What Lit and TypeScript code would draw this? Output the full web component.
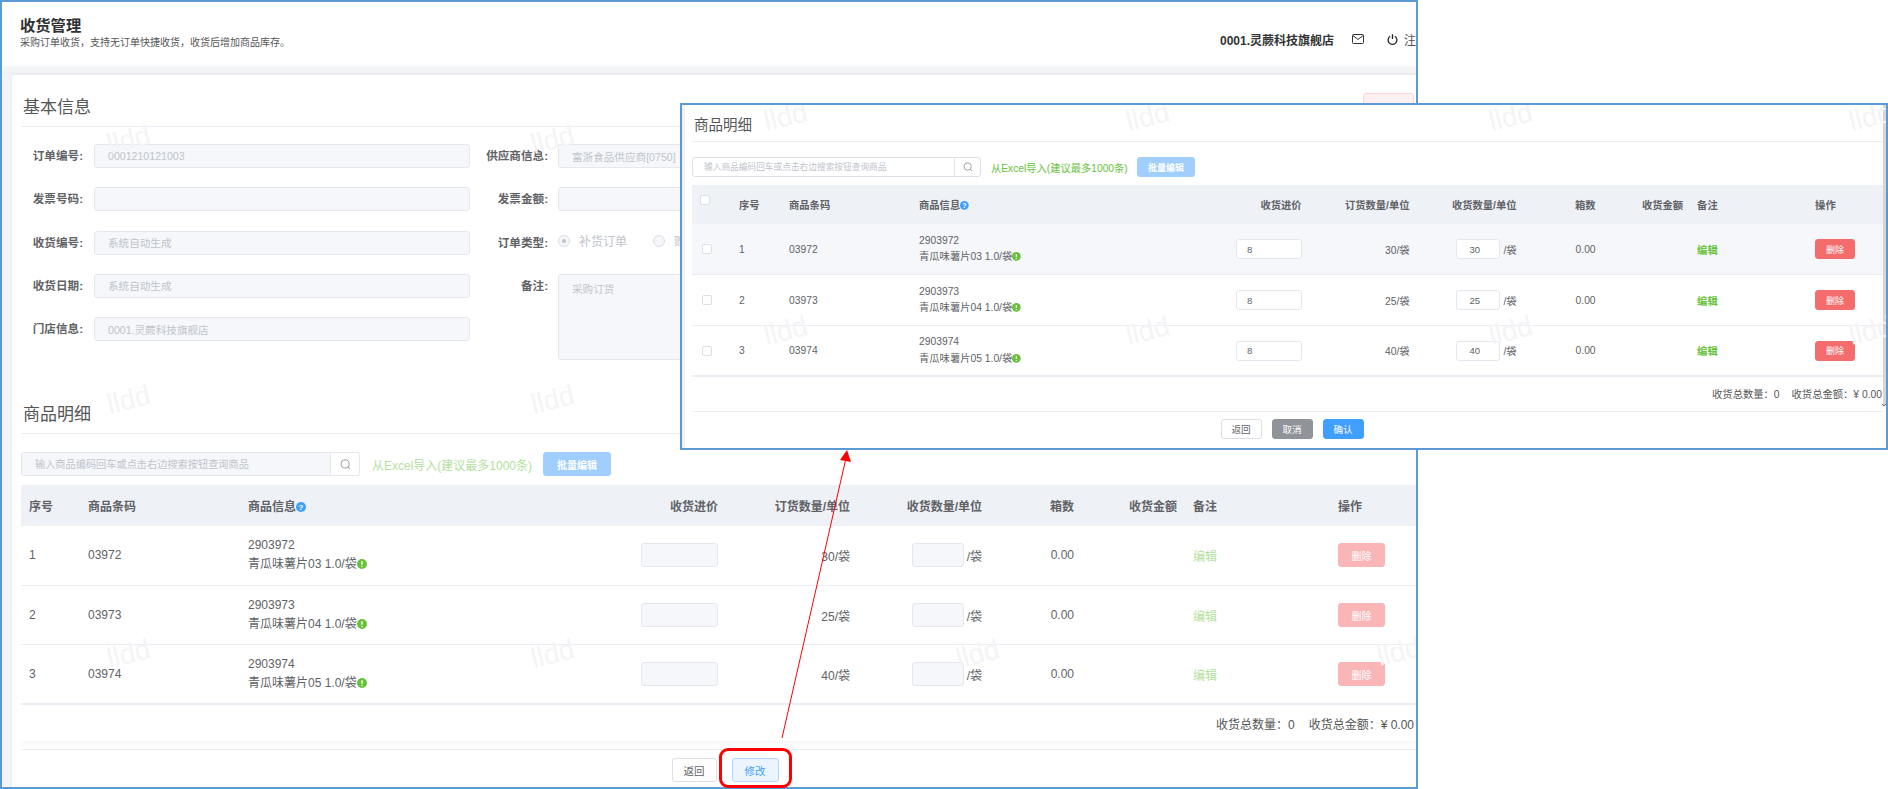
import { LitElement, html, css, svg } from "lit";
import { customElement } from "lit/decorators.js";

const ROWS = [
  { no: 1, bar: "03972", code: "2903972", name: "青瓜味薯片03 1.0/袋", order: 30 },
  { no: 2, bar: "03973", code: "2903973", name: "青瓜味薯片04 1.0/袋", order: 25 },
  { no: 3, bar: "03974", code: "2903974", name: "青瓜味薯片05 1.0/袋", order: 40 },
];

const helpIcon = svg`<svg class="tip" viewBox="0 0 10 10"><circle cx="5" cy="5" r="5" fill="#409eff"/><text x="5" y="8" text-anchor="middle" font-size="8" font-weight="700" fill="#fff" font-family="Liberation Sans, sans-serif">?</text></svg>`;
const bangIcon = svg`<svg class="tip" viewBox="0 0 10 10"><circle cx="5" cy="5" r="5" fill="#67c23a"/><path d="M5 2.2V5.8M5 7V8" stroke="#fff" stroke-width="1.4" fill="none"/></svg>`;
const searchIcon = svg`<svg class="search-ic" viewBox="0 0 12 12"><circle cx="5.6" cy="5.4" r="4.4" fill="none" stroke="#909399" stroke-width="1"/><path d="M8.8 8.6L10.8 10.8" stroke="#909399" stroke-width="1" fill="none"/></svg>`;

@customElement("app-root")
export class AppRoot extends LitElement {
  static styles = css`
    :host { display: block; position: relative; width: 1888px; height: 789px; overflow: hidden; background: #fff;
      font-family: "Liberation Sans", "Noto Sans CJK SC", sans-serif; color: #606266; font-size: 12px; }
    * { box-sizing: border-box; }
    .window { position: relative; width: 1418px; height: 789px; border: 2px solid #5b9bd5; overflow: hidden; display: flex; flex-direction: column; background: #fff; }
    .top { height: 64px; flex: none; display: flex; justify-content: space-between; padding: 14px 0 0 18px; background: #fff; }
    .top h1 { margin: 0; font-size: 15.3px; line-height: 20px; font-weight: 700; color: #303133; }
    .top p { margin: 0; font-size: 10px; line-height: 14px; color: #555; }
    .user { display: flex; align-items: center; height: 46px; margin-right: -12px; flex: none; color: #303133; }
    .user b { font-size: 12px; width: 114px; white-space: nowrap; color: #333; }
    .user svg { flex: none; }
    .mail { width: 12px; height: 10px; margin-left: 18px; }
    .power { width: 11px; height: 11px; margin-left: 23px; }
    .user span { margin-left: 6px; width: 24px; white-space: nowrap; color: #555; }
    .shell { flex: 1; min-height: 0; background: linear-gradient(#f6f7f8, #eef0f3 9px, #f2f4f7 9px); padding: 9px 0 0 10px; display: flex; }
    .card { flex: 1; min-width: 0; background: #fff; padding: 0 0 0 9px; box-shadow: 0 0 4px rgba(0,0,0,.05); position: relative; display: flex; flex-direction: column; }
    .print { position: absolute; right: 2px; top: 18px; width: 51px; height: 24px; background: #fef0f0; border: 1px solid #fbd5d5; border-radius: 3px; }
    .sec { height: 42px; flex: none; display: flex; align-items: center; padding-left: 2px; border-bottom: 1px solid #ebeef5; font-size: 17px; color: #555; }
    .sec.first { margin-top: 10px; }
    .sec.second { margin-top: 51px; }
    .form { margin-top: 17px; display: grid; grid-template-columns: 62px 387px 88px 376px; grid-template-rows: repeat(5, 24px); row-gap: 19.25px; flex: none; }
    .form label { font-weight: 700; font-size: 11.6px; text-align: right; line-height: 24px; white-space: nowrap; color: #606266; }
    .form label.c2 { grid-column: 3; padding-right: 10px; }
    .form .in1 { margin-left: 11px; width: 376px; }
    .form .c1 { grid-column: 1; }
    .fi { height: 24px; width: 376px; border: 1px solid #e4e7ed; border-radius: 3px; background: #f5f7fa; padding: 0 13px; color: #c0c4cc; font: inherit; font-size: 10.6px; outline: none; display: block; }
    .fi::placeholder { color: #c0c4cc; }
    .ta { height: 86px; width: 376px; resize: none; padding: 6px 13px; line-height: 14px; border: 1px solid #e4e7ed; border-radius: 3px; background: #f5f7fa; color: #c0c4cc; font: inherit; font-size: 10.6px; outline: none; display: block; grid-row: 4 / span 2; grid-column: 4; }
    .radios { grid-column: 4; display: flex; align-items: center; height: 20px; color: #c0c4cc; font-size: 12px; white-space: nowrap; }
    .radio { width: 12px; height: 12px; border: 1px solid #dcdfe6; background: #f5f7fa; border-radius: 50%; display: flex; align-items: center; justify-content: center; margin-right: 9px; flex: none; }
    .radio.on::after { content: ""; width: 4px; height: 4px; border-radius: 50%; background: #c0c4cc; }
    .radios span + .radio { margin-left: 26px; }

    .tools { display: flex; align-items: center; flex: none; margin-top: 18px; height: 24px; }
    .search { display: flex; width: 339px; height: 24px; border: 1px solid #e4e7ed; border-radius: 3px; overflow: hidden; flex: none; background: #fff; }
    .search input { flex: 1; min-width: 0; border: 0; background: #f5f7fa; padding: 0 13px; font: inherit; font-size: 10.2px; outline: none; }
    .search input::placeholder { color: #c0c4cc; }
    .search div { width: 29px; flex: none; display: flex; align-items: center; justify-content: center; border-left: 1px solid #e4e7ed; }
    .search-ic { width: 11px; height: 11px; }
    .excel { margin-left: 12px; color: #b3e19d; white-space: nowrap; font-size: 12px; width: 159px; }
    .batch { margin-left: 12px; width: 68px; height: 24px; background: #a0cfff; border: 1px solid #a0cfff; border-radius: 3px; color: #fff; font: inherit; font-size: 10px; font-weight: 700; padding: 0; }

    .tbl { margin-top: 9px; flex: none; }
    .row { display: grid; grid-template-columns: 59px 160px 360px 126px 132px 132px 92px 103px 145px 86px; height: 59.7px; align-items: center; border-bottom: 1px solid #ebeef5; }
    .row.head { height: 41px; background: #eef1f6; border-bottom: 0; font-weight: 700; }
    .row.last { border-bottom-width: 2px; }
    .l { padding-left: 8px; white-space: nowrap; }
    .r { padding-right: 8px; text-align: right; white-space: nowrap; }
    .info { line-height: 19px; }
    .tip { width: 10px; height: 10px; display: inline-block; vertical-align: -1px; }
    .cell-in { display: flex; justify-content: flex-end; align-items: center; padding-right: 8px; white-space: nowrap; }
    .num { height: 24px; width: 77px; border: 1px solid #e4e7ed; border-radius: 3px; background: #f5f7fa; font: inherit; padding: 0 11px; outline: none; color: #606266; }
    .num.qty { width: 52px; margin-right: 3px; }
    .edit { color: #b3e19d; }
    .del { width: 47px; height: 24px; background: #fab6b6; border: 1px solid #fab6b6; border-radius: 3px; color: #fff; font: inherit; font-size: 10px; padding: 0; display: block; }
    .total { height: 36px; flex: none; display: flex; justify-content: flex-end; align-items: center; padding-right: 2px; gap: 14px; white-space: nowrap; color: #555; font-size: 12px; }
    .foot { flex: 1; background: linear-gradient(#f9f9fa, #fff) top/100% 8px no-repeat; padding-top: 8px; }
    .foot-in { border-top: 1px solid #ebeef5; display: flex; justify-content: center; padding: 8px 0 0 13px; gap: 15px; }
    .btn { height: 24px; width: 45px; border: 1px solid #dcdfe6; border-radius: 3px; background: #fff; color: #606266; font: inherit; font-size: 10.5px; padding: 0; }
    .btn.edit-btn { width: 47px; background: #ecf5ff; border-color: #b3d8ff; color: #409eff; }

    .modal { position: absolute; left: 680px; top: 103px; width: 1208px; height: 347px; border: 2px solid #5b9bd5; background: #fff; overflow: hidden; display: flex; font-size: 10.3px; }
    .strip { width: 3px; background: #f0f2f5; flex: none; }
    .mbody { flex: none; width: 1191px; margin-left: 7px; display: flex; flex-direction: column; }
    .modal .sec { height: 37px; font-size: 14.5px; padding-top: 0; margin: 0; }
    .modal .tools { margin-top: 15px; height: 20px; }
    .modal .search { width: 289px; height: 20px; border-color: #dcdfe6; }
    .modal .search input { background: #fff; font-size: 8.7px; padding: 0 11px; }
    .modal .search div { width: 26px; }
    .modal .search-ic { width: 10px; height: 10px; }
    .modal .excel { margin-left: 10px; color: #67c23a; font-size: 10.25px; width: 136px; }
    .modal .batch { margin-left: 10px; width: 58px; height: 20px; font-size: 9px; }
    .modal .tbl { margin-top: 8px; }
    .modal .row { grid-template-columns: 39px 50px 130px 289px 109.6px 108px 107px 79px 87.5px 116px 76px; height: 51px; }
    .modal .row.head { height: 39px; }
    .modal .row.hl { background: #f5f7fa; }
    .modal .info { line-height: 16.5px; }
    .modal .tip { width: 8.7px; height: 8.7px; }
    .modal .num { height: 20px; width: 65.6px; background: #fff; padding: 0 10px; font-size: 9.6px; }
    .modal .num.qty { width: 44px; margin-right: 3px; padding: 0 12px; }
    .modal .edit { color: #67c23a; font-weight: 700; }
    .modal .note { padding-left: 6px; }
    .modal .del { width: 40px; height: 20px; background: #f56c6c; border-color: #f56c6c; font-size: 9px; }
    .check { width: 10px; height: 10px; border: 1px solid #dcdfe6; border-radius: 2px; background: #fff; display: block; margin-left: 10px; }
    .head .check { margin-left: 0; margin-top: -9px; }
    .modal .total { height: 34px; font-size: 10.3px; gap: 12px; padding: 0 1px 2px 0; }
    .modal .foot-in { flex: none; padding: 7px 0 0 9px; gap: 10px; }
    .modal .btn { width: 41px; height: 20px; font-size: 9.6px; }
    .btn.gray { background: #909399; border-color: #909399; color: #fff; }
    .btn.blue { background: #409eff; border-color: #409eff; color: #fff; }
    .scroll { position: absolute; right: 0; top: 0; width: 3px; height: 300px; background: #d4d6da; }
    .chev { position: absolute; right: 0; top: 298px; width: 4px; height: 4px; }

    .wm { position: absolute; font-size: 28px; color: #f4f4f6; transform: rotate(-14deg); line-height: 1; pointer-events: none; font-family: "Liberation Sans", sans-serif; }
    .redbox { position: absolute; left: 719px; top: 748px; width: 73px; height: 40px; border: 3px solid #f00; border-radius: 9px; }
    .arrow { position: absolute; left: 0; top: 0; width: 1888px; height: 789px; pointer-events: none; }
  `;

  private table(modal: boolean) {
    return html`<div class="tbl">
      <div class="row head">
        ${modal ? html`<div class="l"><i class="check"></i></div>` : ""}
        <div class="l">序号</div><div class="l">商品条码</div><div class="l">商品信息${helpIcon}</div>
        <div class="r">收货进价</div><div class="r">订货数量/单位</div><div class="r">收货数量/单位</div>
        <div class="r">箱数</div><div class="r">收货金额</div><div class="l note">备注</div><div class="l">操作</div>
      </div>
      ${ROWS.map((r, i) => html`<div class="row ${i === 0 ? "hl" : ""} ${i === 2 ? "last" : ""}">
        ${modal ? html`<div><i class="check"></i></div>` : ""}
        <div class="l">${r.no}</div><div class="l">${r.bar}</div>
        <div class="l info">${r.code}<br />${r.name}${bangIcon}</div>
        <div class="cell-in"><input class="num" readonly .value=${modal ? "8" : ""} /></div>
        <div class="r">${r.order}/袋</div>
        <div class="cell-in"><input class="num qty" readonly .value=${modal ? String(r.order) : ""} />/袋</div>
        <div class="r">0.00</div><div class="r"></div>
        <div class="l note edit">编辑</div>
        <div class="l"><button class="del">删除</button></div>
      </div>`)}
    </div>`;
  }

  private tools() {
    return html`<div class="tools">
      <div class="search"><input placeholder="输入商品编码回车或点击右边搜索按钮查询商品" /><div>${searchIcon}</div></div>
      <span class="excel">从Excel导入(建议最多1000条)</span>
      <button class="batch">批量编辑</button>
    </div>`;
  }

  private marks(list: number[][]) {
    return list.map(([x, y]) => html`<span class="wm" style="left:${x}px;top:${y}px">lldd</span>`);
  }

  render() {
    const f = (label: string, value: string, ph = "") => html`<label class="c1">${label}</label><input class="fi in1" readonly .value=${value} placeholder=${ph} />`;
    return html`
      <div class="window">
        <header class="top">
          <div><h1>收货管理</h1><p>采购订单收货\uFF0C支持无订单快捷收货\uFF0C收货后增加商品库存\u3002</p></div>
          <div class="user">
            <b>0001.灵蕨科技旗舰店</b>
            <svg class="mail" viewBox="0 0 12 10"><rect x=".5" y=".5" width="11" height="9" rx="1" fill="none" stroke="#333"/><path d="M1 1.5L6 5.5L11 1.5" fill="none" stroke="#333"/></svg>
            <svg class="power" viewBox="0 0 11 11"><path d="M3.2 2.2A4.4 4.4 0 1 0 7.8 2.2" fill="none" stroke="#222" stroke-width="1.3"/><path d="M5.5 .3V5" stroke="#222" stroke-width="1.3" fill="none"/></svg>
            <span>注销</span>
          </div>
        </header>
        <div class="shell">
          <main class="card">
            <div class="print"></div>
            <div class="sec first">基本信息</div>
            <div class="form">
              ${f("订单编号:", "0001210121003")}
              <label class="c2" style="grid-row:1">供应商信息:</label><input class="fi" style="grid-column:4;grid-row:1" readonly .value=${"富浙食品供应商[0750]"} />
              ${f("发票号码:", "")}
              <label class="c2" style="grid-row:2">发票金额:</label><input class="fi" style="grid-column:4;grid-row:2" readonly />
              ${f("收货编号:", "", "系统自动生成")}
              <label class="c2" style="grid-row:3">订单类型:</label>
              <div class="radios" style="grid-row:3"><i class="radio on"></i><span>补货订单</span><i class="radio"></i><span>赠品订单</span></div>
              ${f("收货日期:", "", "系统自动生成")}
              <label class="c2" style="grid-row:4">备注:</label><textarea class="ta" readonly .value=${"采购订货"}></textarea>
              ${f("门店信息:", "0001.灵蕨科技旗舰店")}
            </div>
            <div class="sec second">商品明细</div>
            ${this.tools()}
            ${this.table(false)}
            <div class="total"><span>收货总数量\uFF1A0</span><span>收货总金额\uFF1A¥ 0.00</span></div>
            <div class="foot"><div class="foot-in"><button class="btn">返回</button><button class="btn edit-btn">修改</button></div></div>
          </main>
        </div>
        ${this.marks([[105, 124], [529, 124], [105, 384], [529, 384], [105, 638], [529, 638], [954, 638], [1375, 636]])}
      </div>

      <section class="modal">
        <div class="strip"></div>
        <div class="mbody">
          <div class="sec">商品明细</div>
          ${this.tools()}
          ${this.table(true)}
          <div class="total"><span>收货总数量\uFF1A0</span><span>收货总金额\uFF1A¥ 0.00</span></div>
          <div class="foot-in"><button class="btn">返回</button><button class="btn gray">取消</button><button class="btn blue">确认</button></div>
        </div>
        <div class="scroll"></div>
        <svg class="chev" viewBox="0 0 4 4"><path d="M0 1L2 3L4 1" fill="none" stroke="#666"/></svg>
        ${this.marks([[82, -2], [444, -2], [807, -2], [1167, -2], [82, 212], [444, 212], [807, 212], [1167, 212]])}
      </section>

      <div class="redbox"></div>
      <svg class="arrow" viewBox="0 0 1888 789">
        <path d="M782 738L846 458" stroke="#f00" stroke-width="1" fill="none"/>
        <polygon points="847,450 851,462 840,460" fill="#f00"/>
      </svg>
    `;
  }
}
